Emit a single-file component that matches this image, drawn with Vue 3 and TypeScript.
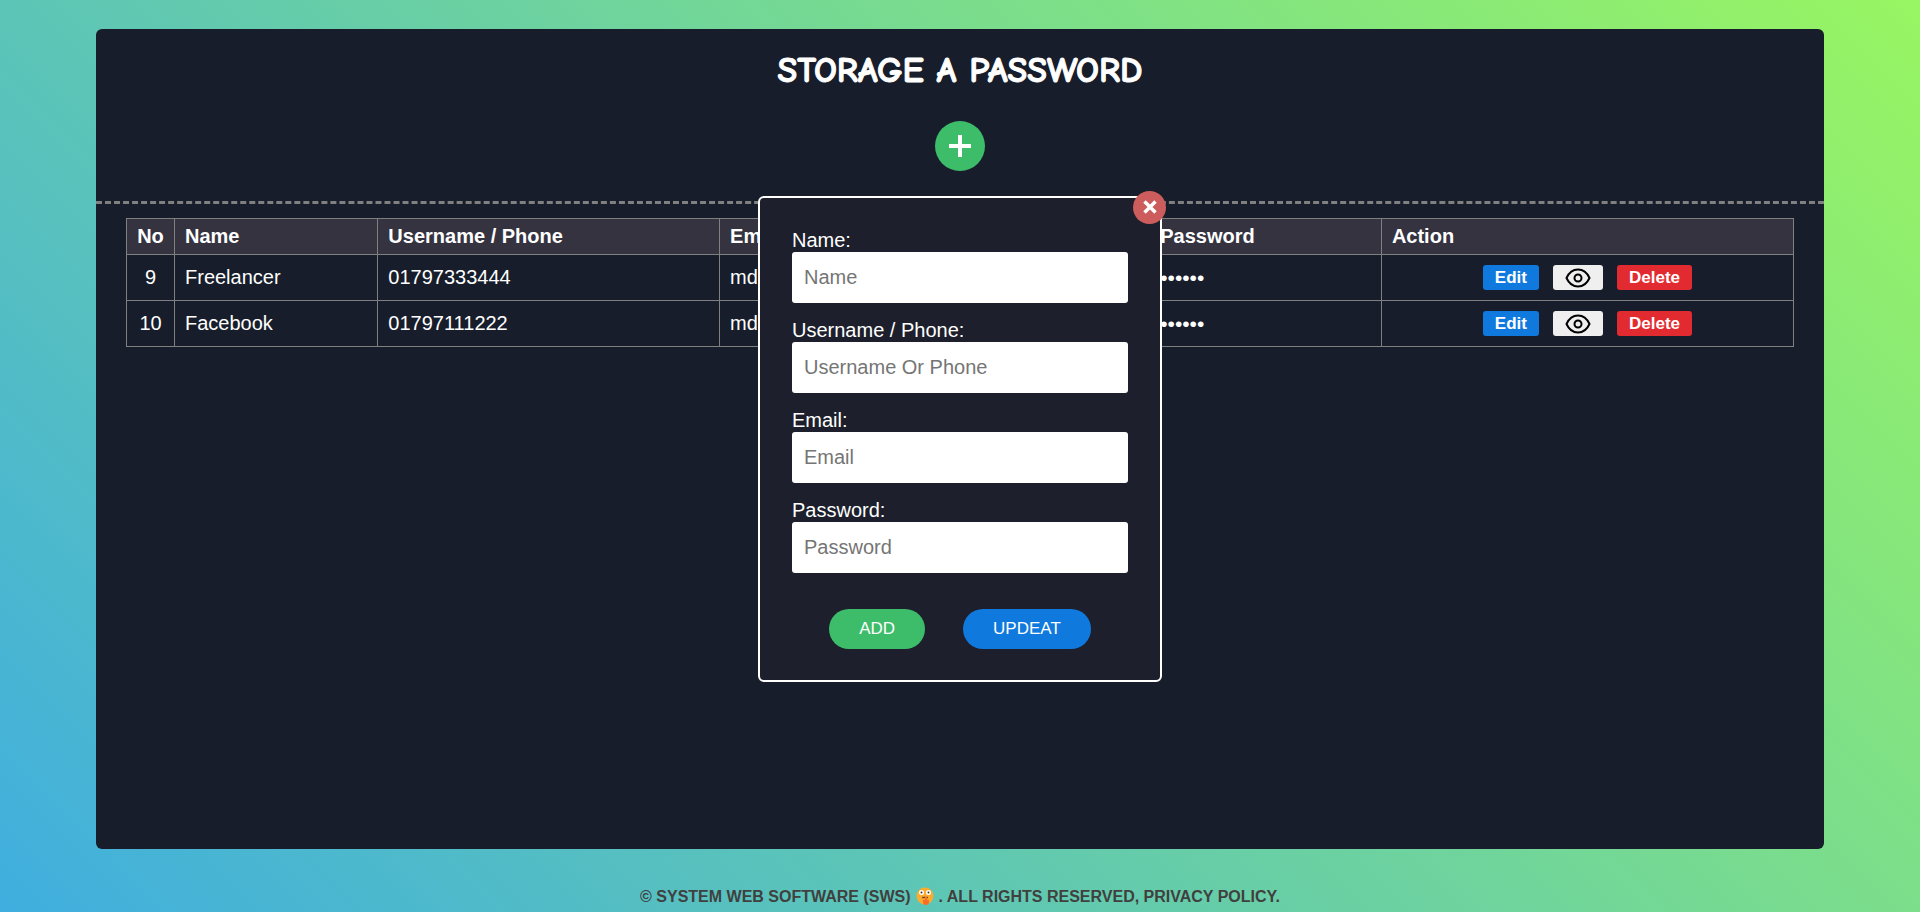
<script setup lang="ts">
import { ref } from 'vue'

interface Entry {
  no: number
  name: string
  user: string
  email: string
}

const entries: Entry[] = [
  { no: 9, name: 'Freelancer', user: '01797333444', email: 'mds' },
  { no: 10, name: 'Facebook', user: '01797111222', email: 'mds' },
]

const fields = [
  { id: 'name', label: 'Name:', placeholder: 'Name', type: 'text' },
  { id: 'user', label: 'Username / Phone:', placeholder: 'Username Or Phone', type: 'text' },
  { id: 'email', label: 'Email:', placeholder: 'Email', type: 'email' },
  { id: 'password', label: 'Password:', placeholder: 'Password', type: 'password' },
]

const open = ref(true)
</script>

<template>
  <div class="page">
    <main class="panel">
      <header class="head">
        <h1>STORAGE A PASSWORD</h1>
        <button class="plus" type="button" aria-label="Add entry" @click="open = true">
          <svg viewBox="0 0 22 22" width="22" height="22"><path d="M11 0v22M0 11h22" stroke="#fff" stroke-width="4" /></svg>
        </button>
      </header>

      <div class="table-wrap">
        <table>
          <colgroup>
            <col class="c-no" /><col class="c-name" /><col class="c-user" />
            <col class="c-email" /><col class="c-pass" /><col />
          </colgroup>
          <thead>
            <tr>
              <th class="center">No</th>
              <th>Name</th>
              <th>Username / Phone</th>
              <th>Email</th>
              <th>Password</th>
              <th>Action</th>
            </tr>
          </thead>
          <tbody>
            <tr v-for="e in entries" :key="e.no">
              <td class="center">{{ e.no }}</td>
              <td>{{ e.name }}</td>
              <td>{{ e.user }}</td>
              <td>{{ e.email }}</td>
              <td class="dots">••••••</td>
              <td>
                <div class="actions">
                  <button class="edit" type="button">Edit</button>
                  <button class="view" type="button" aria-label="Show password">
                    <svg viewBox="0 0 26 20" width="26" height="20" fill="none" stroke="#000" stroke-width="2">
                      <path d="M1.500 10C4 4.500 8 1.500 13 1.500S22 4.500 24.500 10C22 15.500 18 18.500 13 18.500S4 15.500 1.500 10Z" stroke-linejoin="round" />
                      <circle cx="13" cy="10" r="3.500" />
                    </svg>
                  </button>
                  <button class="delete" type="button">Delete</button>
                </div>
              </td>
            </tr>
          </tbody>
        </table>
      </div>

      <form v-if="open" class="modal" @submit.prevent>
        <button class="close" type="button" aria-label="Close" @click="open = false">
          <svg viewBox="0 0 14 14" width="14" height="14"><path d="M1.500 1.500l11 11M12.500 1.500l-11 11" stroke="#fff" stroke-width="3.500" /></svg>
        </button>
        <div v-for="f in fields" :key="f.id" class="field">
          <label :for="f.id">{{ f.label }}</label>
          <input :id="f.id" :type="f.type" :placeholder="f.placeholder" />
        </div>
        <div class="buttons">
          <button class="add" type="submit">ADD</button>
          <button class="update" type="button">UPDEAT</button>
        </div>
      </form>
    </main>

    <footer>
      <span>© SYSTEM WEB SOFTWARE (SWS)</span>
      <svg class="face" viewBox="0 0 18 18" width="18" height="18" aria-hidden="true">
        <circle cx="9" cy="9" r="8.500" fill="#fdab2f" />
        <circle cx="5.500" cy="5.500" r="2.500" fill="#fff" /><circle cx="12.500" cy="5.500" r="2.500" fill="#fff" />
        <circle cx="5.500" cy="5.500" r="1" fill="#443322" /><circle cx="12.500" cy="5.500" r="1" fill="#443322" />
        <path d="M6 10.500h6" stroke="#7a4a25" stroke-width="1.500" />
        <path d="M9 10h2v3h2v3q-1 2-3 2-3 0-3-3v-2h2z" fill="#fb6d26" />
      </svg>
      <span>. ALL RIGHTS RESERVED, PRIVACY POLICY.</span>
    </footer>
  </div>
</template>

<style>
body {
  margin: 0;
}
</style>

<style scoped>
.page {
  min-height: 100vh;
  box-sizing: border-box;
  padding-top: 29px;
  display: flex;
  flex-direction: column;
  align-items: center;
  background: linear-gradient(45deg, #40aedf, #98f562);
  font-family: Arial, "Liberation Sans", sans-serif;
  font-size: 20px;
  line-height: 23px;
  color: #fff;
}
button {
  font-family: inherit;
  border: none;
  padding: 0;
  color: #fff;
  cursor: pointer;
}
.panel {
  position: relative;
  width: 90%;
  min-height: calc(90vh - 1px);
  border-radius: 6px;
  background: #171d2a;
}
.head {
  display: flex;
  flex-direction: column;
  align-items: center;
  padding: 20px 0 30px;
  border-bottom: 3px dashed #808080;
}
h1 {
  margin: 0 0 28px;
  font: 700 36px/44px "Comic Sans MS", "Comic Neue", Lato, sans-serif;
  -webkit-text-stroke: 1px #fff;
}
.plus {
  width: 50px;
  height: 50px;
  border-radius: 50%;
  display: grid;
  place-items: center;
  background: #3dbd6a;
}
.table-wrap {
  padding: 14px 30px;
}
table {
  width: 100%;
  table-layout: fixed;
  border-collapse: collapse;
}
.c-no { width: 48px; }
.c-name { width: 12.2%; }
.c-user { width: 20.5%; }
.c-email { width: 25.8%; }
.c-pass { width: 13.9%; }
th, td {
  box-sizing: border-box;
  border: 1px solid #808080;
  padding: 0 10px;
  text-align: left;
}
th {
  height: 36px;
  background: #353340;
}
td {
  height: 46px;
}
th.center, td.center {
  padding: 0;
  text-align: center;
}
td.dots {
  font-size: 21px;
}
.actions {
  display: flex;
  justify-content: center;
  gap: 14px;
}
.actions button {
  height: 25px;
  padding: 0 12px;
  border-radius: 3px;
  font-size: 17px;
  font-weight: 700;
  display: grid;
  place-items: center;
}
.actions .edit, .buttons .update {
  background: #1079de;
}
.actions .view {
  background: #efefef;
}
.actions .delete {
  background: #e22b31;
}
.modal {
  position: absolute;
  top: 50%;
  left: 50%;
  transform: translate(-50%, -50%);
  box-sizing: border-box;
  width: 404px;
  padding: 31px 32px;
  border: 2px solid #fff;
  border-radius: 6px;
  background: #1d202c;
}
.close {
  position: absolute;
  top: -7px;
  right: -6px;
  width: 33px;
  height: 33px;
  border-radius: 50%;
  display: grid;
  place-items: center;
  background: #cd5c5c;
}
.field {
  display: flex;
  flex-direction: column;
  margin-bottom: 16px;
}
.field input {
  box-sizing: border-box;
  height: 51px;
  padding: 0 12px;
  border: none;
  border-radius: 3px;
  background: #fff;
  font: 20px Arial, "Liberation Sans", sans-serif;
}
.field input::placeholder {
  color: #757575;
}
.buttons {
  display: flex;
  justify-content: center;
  gap: 38px;
  margin-top: 36px;
}
.buttons button {
  height: 40px;
  padding: 0 30px;
  border-radius: 20px;
  font-size: 17px;
}
.buttons .add {
  background: #3dbd6a;
}
footer {
  flex: 1;
  display: flex;
  align-items: center;
  padding-top: 32px;
  gap: 5px;
  font-size: 16px;
  font-weight: 700;
  color: #40403f;
}
</style>
